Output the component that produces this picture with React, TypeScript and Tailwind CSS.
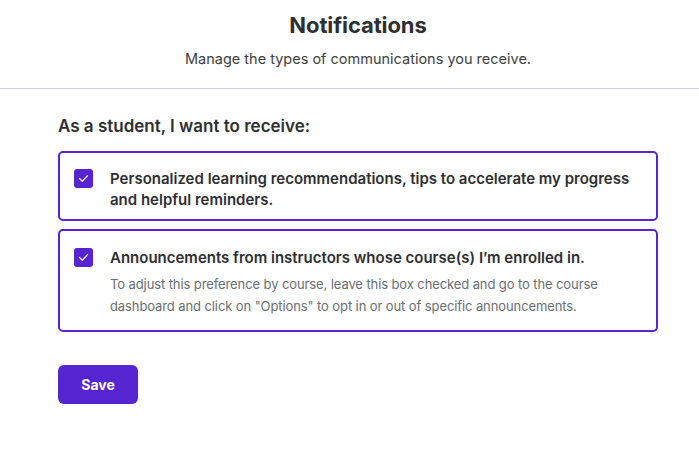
const font = { fontFamily: "Inter, 'Noto Sans', sans-serif" };

function Check() {
  return (
    <span className="flex h-[19px] w-[19px] shrink-0 items-center justify-center rounded-[3px] bg-[#5624d0]">
      <svg width="11" height="9" viewBox="0 0 11 9" fill="none">
        <path d="M1.5 4.5l2.8 2.8L9.5 1.8" stroke="#e9e2fb" strokeWidth="1.3" strokeLinecap="round" strokeLinejoin="round" />
      </svg>
    </span>
  );
}

export default function App() {
  return (
    <div className="min-h-screen bg-white text-[#2d2f31]" style={font}>
      {/* Header */}
      <header className="border-b border-[#d1d0dc] pb-[19px] pt-[10px] pl-[17px] text-center">
        <h1 className="text-[22px] font-bold leading-[30px] tracking-[-0.1px] text-[#2d2f31]">Notifications</h1>
        <p className="mt-[9px] text-[14.5px] leading-[20px] text-[#3e4143]">
          Manage the types of communications you receive.
        </p>
      </header>

      <main className="pl-[58px] pr-[41px] pt-[25px]">
        <h2 className="text-[17px] font-semibold leading-[24px]">As a student, I want to receive:</h2>

        <div className="mt-[13px] flex flex-col gap-[8px]">
          <label className="flex gap-[17px] rounded-[5px] border-2 border-[#5624d0] px-[14px] pb-[9px] pt-[15px]">
            <span className="pt-[1px]">
              <Check />
            </span>
            <span className="text-[15px] font-semibold leading-[21px] text-[#2d2f31]">
              Personalized learning recommendations, tips to accelerate my progress and helpful reminders.
            </span>
          </label>

          <label className="flex gap-[17px] rounded-[5px] border-2 border-[#5624d0] px-[14px] pb-[13px] pt-[16px]">
            <span className="pt-[1px]">
              <Check />
            </span>
            <span className="flex flex-col">
              <span className="text-[15px] font-semibold leading-[21px] text-[#2d2f31]">
                Announcements from instructors whose course(s) I’m enrolled in.
              </span>
              <span className="mt-[5px] text-[13px] leading-[22px] tracking-[-0.1px] text-[#6a6f73]">
                To adjust this preference by course, leave this box checked and go to the course dashboard and click on "Options" to opt in or out of specific announcements.
              </span>
            </span>
          </label>
        </div>

        <button className="mt-[33px] h-[39px] w-[80px] rounded-[6px] bg-[#5624d0] text-[14px] font-bold text-white">
          Save
        </button>
      </main>
    </div>
  );
}
